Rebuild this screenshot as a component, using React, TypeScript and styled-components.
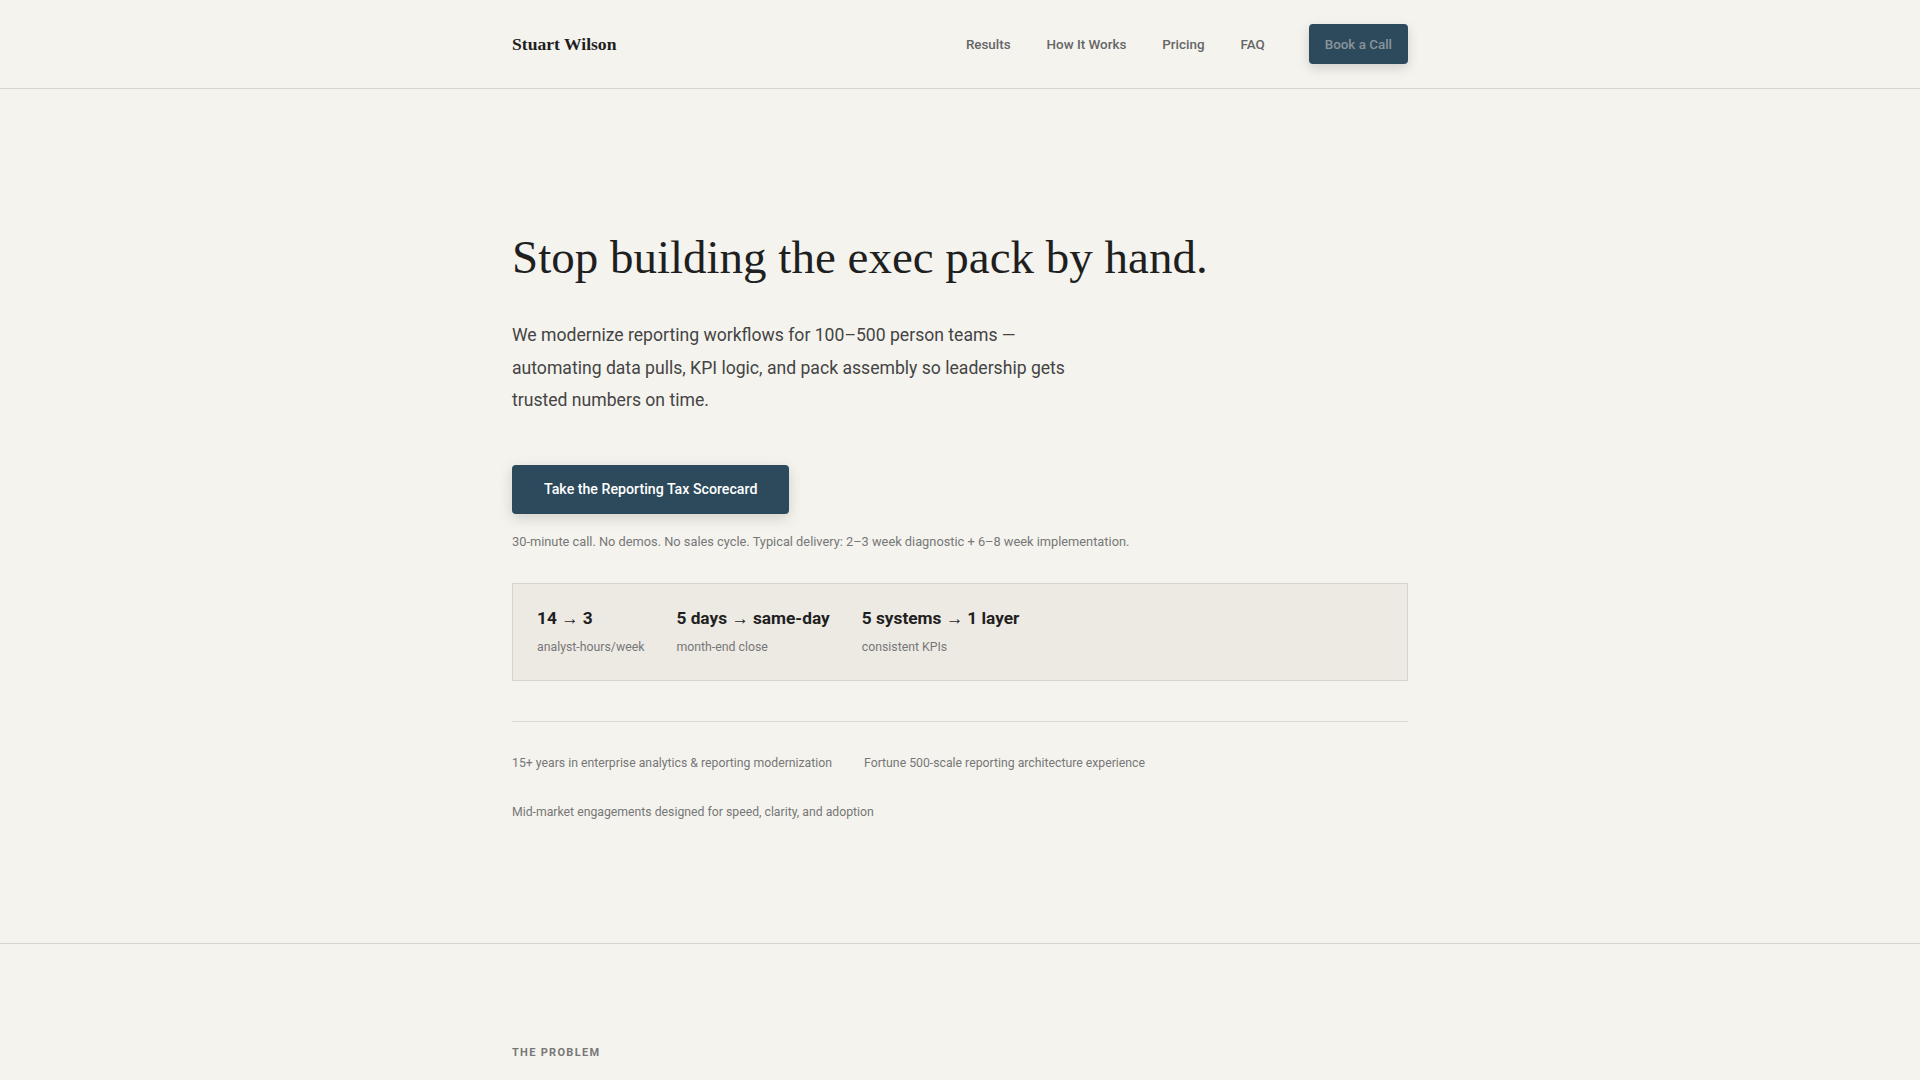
import React from "react";
import styled, { createGlobalStyle } from "styled-components";

const Global = createGlobalStyle`
  * { box-sizing: border-box; }
  html, body { margin: 0; padding: 0; }
  body {
    background: #f4f3ee;
    font-family: Roboto, "Liberation Sans", sans-serif;
    color: #1f1f1f;
  }
`;

const Header = styled.header`
  height: 89px;
  border-bottom: 1px solid #d6d4ce;
`;

const Container = styled.div`
  max-width: 896px;
  margin: 0 auto;
`;

const HeaderInner = styled(Container)`
  height: 100%;
  display: flex;
  align-items: center;
  justify-content: space-between;
`;

const Logo = styled.div`
  font-family: "Liberation Serif", serif;
  font-weight: 700;
  font-size: 17.6px;
  color: #1f1f1f;
`;

const Nav = styled.nav`
  display: flex;
  align-items: center;
  gap: 36px;
`;

const NavLink = styled.a`
  font-size: 13.4px;
  font-weight: 500;
  color: #666;
  text-decoration: none;
`;

const NavButton = styled.a`
  margin-left: 8px;
  display: inline-flex;
  align-items: center;
  height: 40px;
  padding: 0 16px;
  background: #2d4a5c;
  border-radius: 4px;
  color: #8a949b;
  font-size: 13.4px;
  font-weight: 500;
  text-decoration: none;
  box-shadow: 0 4px 12px rgba(0, 0, 0, 0.15);
`;

const Hero = styled.section`
  padding: 140px 0 122px;
  border-bottom: 1px solid #d6d4ce;
`;

const Title = styled.h1`
  margin: 0;
  font-family: "Liberation Serif", serif;
  font-weight: 400;
  font-size: 47px;
  line-height: 1.2;
  color: #1f1f1f;
`;

const Lead = styled.p`
  margin: 34px 0 0;
  max-width: 564px;
  font-size: 17.6px;
  line-height: 32.5px;
  color: #444;
`;

const Cta = styled.a`
  display: inline-flex;
  align-items: center;
  margin-top: 48px;
  height: 49px;
  padding: 0 32px;
  background: #2d4a5c;
  border-radius: 4px;
  color: #fff;
  font-size: 14.2px;
  font-weight: 500;
  text-decoration: none;
  box-shadow: 0 4px 14px rgba(0, 0, 0, 0.15);
`;

const Note = styled.p`
  margin: 20px 0 0;
  font-size: 12.8px;
  color: #777;
`;

const Stats = styled.div`
  margin-top: 34px;
  display: flex;
  gap: 32px;
  padding: 23px 24px 26px;
  background: #edeae4;
  border: 1px solid #d6d4ce;
`;

const Stat = styled.div`
  display: flex;
  flex-direction: column;
  gap: 11px;
`;

const StatValue = styled.div`
  font-size: 17.3px;
  font-weight: 700;
  color: #1f1f1f;
  line-height: 1.3;
`;

const StatLabel = styled.div`
  font-size: 12.3px;
  color: #777;
`;

const Trust = styled.div`
  margin-top: 40px;
  padding-top: 33px;
  border-top: 1px solid #dedcd6;
  display: flex;
  flex-wrap: wrap;
  column-gap: 32px;
  row-gap: 32px;
`;

const TrustItem = styled.span`
  font-size: 12.25px;
  line-height: 17px;
  color: #777;
`;

const Problem = styled.section`
  padding-top: 102px;
`;

const Eyebrow = styled.div`
  font-size: 11px;
  font-weight: 700;
  letter-spacing: 1.3px;
  text-transform: uppercase;
  color: #777;
`;

export default function App() {
  return (
    <>
      <Global />
      <Header>
        <HeaderInner>
          <Logo>Stuart Wilson</Logo>
          <Nav>
            <NavLink href="#">Results</NavLink>
            <NavLink href="#">How It Works</NavLink>
            <NavLink href="#">Pricing</NavLink>
            <NavLink href="#">FAQ</NavLink>
            <NavButton href="#">Book a Call</NavButton>
          </Nav>
        </HeaderInner>
      </Header>
      <Hero>
        <Container>
          <Title>Stop building the exec pack by hand.</Title>
          <Lead>
            We modernize reporting workflows for 100–500 person teams — automating data pulls, KPI
            logic, and pack assembly so leadership gets trusted numbers on time.
          </Lead>
          <Cta href="#">Take the Reporting Tax Scorecard</Cta>
          <Note>
            30-minute call. No demos. No sales cycle. Typical delivery: 2–3 week diagnostic + 6–8
            week implementation.
          </Note>
          <Stats>
            <Stat>
              <StatValue>14 → 3</StatValue>
              <StatLabel>analyst-hours/week</StatLabel>
            </Stat>
            <Stat>
              <StatValue>5 days → same-day</StatValue>
              <StatLabel>month-end close</StatLabel>
            </Stat>
            <Stat>
              <StatValue>5 systems → 1 layer</StatValue>
              <StatLabel>consistent KPIs</StatLabel>
            </Stat>
          </Stats>
          <Trust>
            <TrustItem>15+ years in enterprise analytics &amp; reporting modernization</TrustItem>
            <TrustItem>Fortune 500-scale reporting architecture experience</TrustItem>
            <TrustItem>Mid-market engagements designed for speed, clarity, and adoption</TrustItem>
          </Trust>
        </Container>
      </Hero>
      <Problem>
        <Container>
          <Eyebrow>The Problem</Eyebrow>
        </Container>
      </Problem>
    </>
  );
}
